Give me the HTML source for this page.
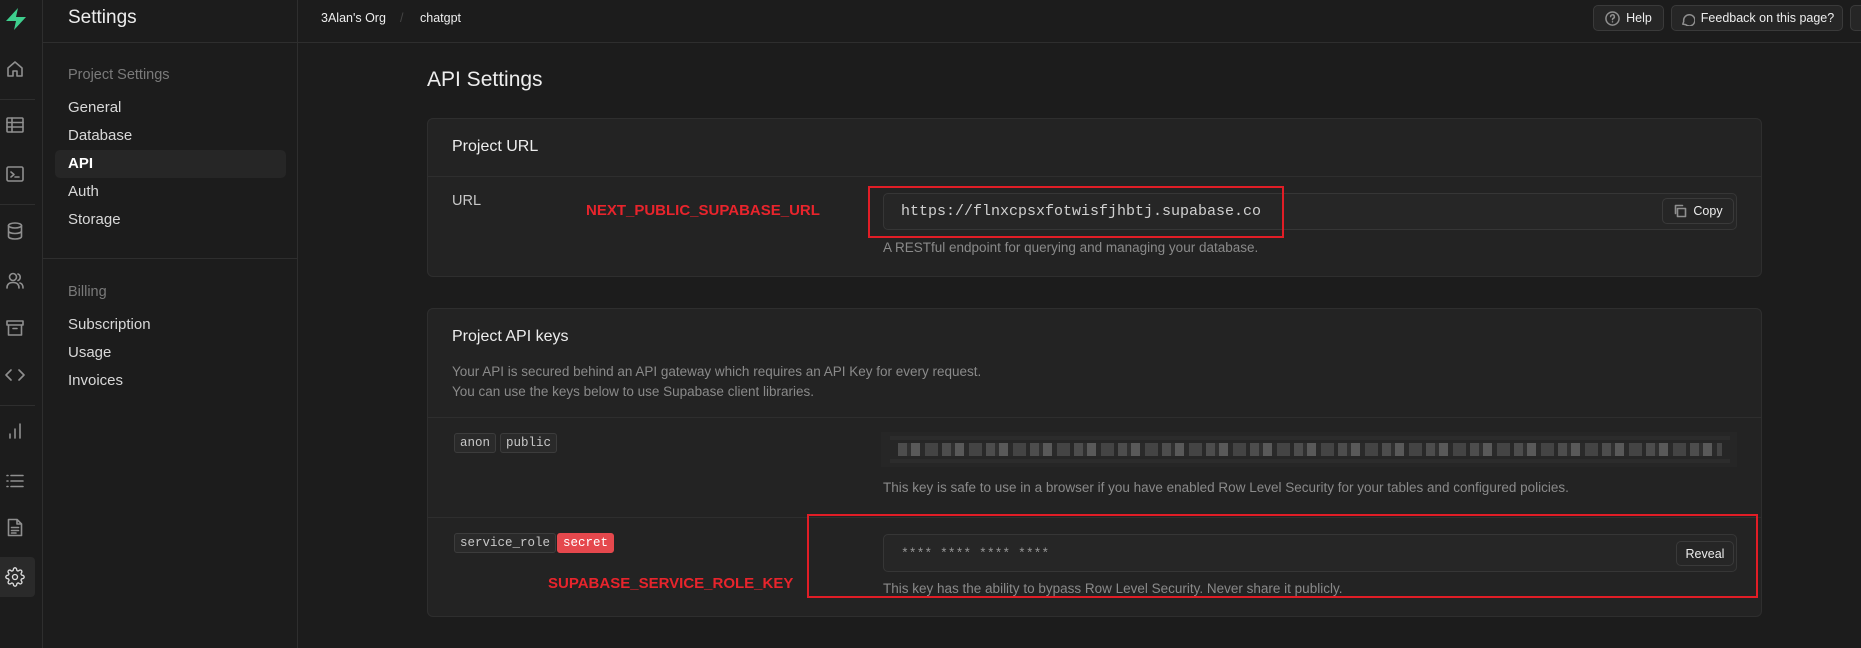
<!DOCTYPE html>
<html><head><meta charset="utf-8"><style>
*{box-sizing:border-box;margin:0;padding:0}
body{width:1861px;height:648px;background:#1c1c1c;font-family:"Liberation Sans",sans-serif;color:#ededed;position:relative;overflow:hidden}
.a{position:absolute;white-space:nowrap}
.rail{left:0;top:0;width:43px;height:648px;border-right:1px solid #2e2e2e}
.side{left:43px;top:0;width:255px;height:648px;border-right:1px solid #2e2e2e}
.nav{font-size:15px;color:#d8d8d8}
.grp{font-size:14.5px;color:#7a7a7a}
.card{background:#232323;border:1px solid #2e2e2e;border-radius:6px}
.hr{height:1px;background:#2e2e2e}
.inp{background:#262626;border:1px solid #363636;border-radius:5px}
.btn{background:#262626;border:1px solid #3a3a3a;border-radius:5px;font-size:12.5px;color:#ededed;display:flex;align-items:center;justify-content:center;gap:6px}
.chip{background:#2a2a2a;border:1px solid #3c3c3c;border-radius:3px;font-family:"Liberation Mono",monospace;font-size:12.5px;color:#c8c8c8;height:20px;line-height:18px;padding:0 5px}
.red{color:#e8242c;font-weight:bold;font-size:15px}
.box{border:2px solid #e11d26}
.hlp{font-size:13.5px;color:#8a8a8a}
svg{stroke:#8f8f8f;fill:none;stroke-width:1.6;stroke-linecap:round;stroke-linejoin:round}
</style></head><body>
<div class="a rail"></div>
<div class="a side"></div>
<div class="a hr" style="left:43px;top:42px;width:1818px"></div>
<div class="a hr" style="left:43px;top:258px;width:255px"></div>
<div class="a hr" style="left:0;top:99px;width:35px"></div>
<div class="a hr" style="left:0;top:204px;width:35px"></div>
<div class="a hr" style="left:0;top:405px;width:35px"></div>
<svg class="a" style="left:3px;top:6px;stroke:none" width="26" height="26" viewBox="0 0 26 26"><path d="M15 2 L3 15 H13 L11 24 L23 11 H13 Z" fill="#3ecf8e"/></svg>
<svg class="a" style="left:6px;top:60px" width="18" height="18" viewBox="0 0 18 18"><path d="M2 8 L9 2 L16 8 V16 H11 V11 H7 V16 H2 Z"/></svg>
<svg class="a" style="left:6px;top:117px" width="18" height="16" viewBox="0 0 18 16"><rect x="1" y="1" width="16" height="14" rx="1"/><path d="M1 5.5H17M1 10H17M6 1V15"/></svg>
<svg class="a" style="left:6px;top:166px" width="18" height="16" viewBox="0 0 18 16"><rect x="1" y="1" width="16" height="14" rx="1.5"/><path d="M5 6L8 8.5L5 11M9 11H13"/></svg>
<svg class="a" style="left:7px;top:222px" width="16" height="18" viewBox="0 0 16 18"><ellipse cx="8" cy="3.5" rx="6.5" ry="2.5"/><path d="M1.5 3.5V14.5C1.5 16 4.5 17 8 17S14.5 16 14.5 14.5V3.5M1.5 9C1.5 10.5 4.5 11.5 8 11.5S14.5 10.5 14.5 9"/></svg>
<svg class="a" style="left:6px;top:272px" width="18" height="17" viewBox="0 0 18 17"><circle cx="7" cy="5" r="3.5"/><path d="M1 16C1 12 3.5 10.5 7 10.5S13 12 13 16M12 2A3.5 3.5 0 0 1 12 8.5M14 11C16 11.5 17 13 17 16"/></svg>
<svg class="a" style="left:6px;top:320px" width="18" height="16" viewBox="0 0 18 16"><rect x="1" y="1" width="16" height="4"/><path d="M2.5 5V15H15.5V5M7 8.5H11"/></svg>
<svg class="a" style="left:5px;top:369px" width="20" height="12" viewBox="0 0 20 12"><path d="M6 1L1 6L6 11M14 1L19 6L14 11"/></svg>
<svg class="a" style="left:8px;top:423px" width="14" height="16" viewBox="0 0 14 16"><path d="M2 15V11M7 15V6M12 15V1"/></svg>
<svg class="a" style="left:6px;top:474px" width="18" height="14" viewBox="0 0 18 14"><path d="M1 1.5H2M1 7H2M1 12.5H2M5 1.5H17M5 7H17M5 12.5H17"/></svg>
<svg class="a" style="left:7px;top:518px" width="16" height="19" viewBox="0 0 16 19"><path d="M1.5 1.5H10L14.5 6V17.5H1.5Z M10 1.5V6H14.5 M4.5 9.5H11.5M4.5 12.5H11.5M4.5 15H9"/></svg>
<div class="a" style="left:0;top:557px;width:35px;height:40px;background:#2a2a2a;border-radius:0 4px 4px 0"></div>
<svg class="a" style="left:5px;top:567px" width="20" height="20" viewBox="0 0 24 24"><circle cx="12" cy="12" r="3" stroke="#ddd"/><path stroke="#ddd" d="M19.4 15a1.65 1.65 0 0 0 .33 1.82l.06.06a2 2 0 1 1-2.83 2.83l-.06-.06a1.65 1.65 0 0 0-1.820-.33 1.65 1.65 0 0 0-1 1.51V21a2 2 0 1 1-4 0v-.09A1.65 1.65 0 0 0 9 19.4a1.65 1.65 0 0 0-1.82.33l-.06.06a2 2 0 1 1-2.83-2.83l.06-.06A1.65 1.65 0 0 0 4.68 15a1.65 1.65 0 0 0-1.51-1H3a2 2 0 1 1 0-4h.09A1.65 1.65 0 0 0 4.6 9a1.65 1.65 0 0 0-.33-1.82l-.06-.06a2 2 0 1 1 2.83-2.83l.06.06A1.65 1.65 0 0 0 9 4.68a1.65 1.65 0 0 0 1-1.51V3a2 2 0 1 1 4 0v.09a1.65 1.65 0 0 0 1 1.51 1.65 1.65 0 0 0 1.82-.33l.06-.06a2 2 0 1 1 2.83 2.83l-.06.06A1.65 1.65 0 0 0 19.4 9a1.65 1.65 0 0 0 1.51 1H21a2 2 0 1 1 0 4h-.09a1.65 1.65 0 0 0-1.51 1z"/></svg>

<div class="a" style="left:68px;top:7px;font-size:19px;color:#ededed">Settings</div>
<div class="a grp" style="left:68px;top:67px">Project Settings</div>
<div class="a" style="left:55px;top:150px;width:231px;height:28px;background:#262626;border-radius:5px"></div>
<div class="a nav" style="left:68px;top:99px">General</div>
<div class="a nav" style="left:68px;top:127px">Database</div>
<div class="a nav" style="left:68px;top:155px;color:#fff;font-weight:bold">API</div>
<div class="a nav" style="left:68px;top:183px">Auth</div>
<div class="a nav" style="left:68px;top:211px">Storage</div>
<div class="a grp" style="left:68px;top:284px">Billing</div>
<div class="a nav" style="left:68px;top:316px">Subscription</div>
<div class="a nav" style="left:68px;top:344px">Usage</div>
<div class="a nav" style="left:68px;top:372px">Invoices</div>

<div class="a" style="left:321px;top:11px;font-size:12.5px">3Alan's Org</div>
<div class="a" style="left:400px;top:11px;font-size:12.5px;color:#444">/</div>
<div class="a" style="left:420px;top:11px;font-size:12.5px">chatgpt</div>
<div class="a btn" style="left:1593px;top:5px;width:71px;height:26px"><svg width="15" height="15" viewBox="0 0 16 16"><circle cx="8" cy="8" r="7"/><path d="M6 6a2 2 0 1 1 2.5 2c-.5.2-.5.6-.5 1.2M8 11.5v.1"/></svg>Help</div>
<div class="a btn" style="left:1671px;top:5px;width:172px;height:26px"><svg width="15" height="15" viewBox="0 0 16 16"><path d="M3 14l1-3A6 6 0 1 1 6 14.5Z"/></svg>Feedback on this page?</div>
<div class="a btn" style="left:1850px;top:5px;width:30px;height:26px"></div>

<div class="a" style="left:427px;top:68px;font-size:21px;color:#ededed">API Settings</div>

<div class="a card" style="left:427px;top:118px;width:1335px;height:159px"></div>
<div class="a hr" style="left:428px;top:176px;width:1333px"></div>
<div class="a" style="left:452px;top:138px;font-size:16px">Project URL</div>
<div class="a" style="left:452px;top:193px;font-size:14.5px;color:#c8c8c8">URL</div>
<div class="a red" style="left:586px;top:202px">NEXT_PUBLIC_SUPABASE_URL</div>
<div class="a inp" style="left:883px;top:193px;width:854px;height:37px"></div>
<div class="a" style="left:901px;top:203px;font-family:'Liberation Mono',monospace;font-size:15px;color:#d0d0d0">https://flnxcpsxfotwisfjhbtj.supabase.co</div>
<div class="a box" style="left:868px;top:186px;width:416px;height:52px"></div>
<div class="a btn" style="left:1662px;top:198px;width:72px;height:26px"><svg width="14" height="14" viewBox="0 0 14 14"><rect x="4.5" y="4.5" width="8" height="8"/><path d="M2.5 9.5V1.5H9.5"/></svg>Copy</div>
<div class="a hlp" style="left:883px;top:240px">A RESTful endpoint for querying and managing your database.</div>

<div class="a card" style="left:427px;top:308px;width:1335px;height:309px"></div>
<div class="a" style="left:452px;top:328px;font-size:16px">Project API keys</div>
<div class="a hlp" style="left:452px;top:362px;line-height:20px">Your API is secured behind an API gateway which requires an API Key for every request.<br>You can use the keys below to use Supabase client libraries.</div>
<div class="a hr" style="left:428px;top:417px;width:1333px"></div>
<div class="a chip" style="left:454px;top:433px">anon</div>
<div class="a chip" style="left:500px;top:433px">public</div>
<div class="a" style="left:881px;top:432px;width:856px;height:35px;background:#262626"></div>
<div class="a" style="left:890px;top:436px;width:840px;height:4px;background:#2c2c2c"></div>
<div class="a" style="left:898px;top:443px;width:824px;height:13px;background:repeating-linear-gradient(90deg,#5a5a5a 0 9px,#333 9px 13px,#6a6a6a 13px 22px,#2c2c2c 22px 27px,#4e4e4e 27px 40px,#2a2a2a 40px 44px);opacity:.75"></div>
<div class="a" style="left:890px;top:459px;width:840px;height:4px;background:#2c2c2c"></div>
<div class="a hlp" style="left:883px;top:480px">This key is safe to use in a browser if you have enabled Row Level Security for your tables and configured policies.</div>
<div class="a hr" style="left:428px;top:517px;width:1333px"></div>
<div class="a chip" style="left:454px;top:533px">service_role</div>
<div class="a chip" style="left:557px;top:533px;background:#e5484d;border-color:#e5484d;color:#fff">secret</div>
<div class="a red" style="left:548px;top:575px">SUPABASE_SERVICE_ROLE_KEY</div>
<div class="a inp" style="left:883px;top:534px;width:854px;height:38px"></div>
<div class="a" style="left:901px;top:546px;font-family:'Liberation Mono',monospace;font-size:13px;color:#999">**** **** **** ****</div>
<div class="a btn" style="left:1676px;top:541px;width:58px;height:25px">Reveal</div>
<div class="a hlp" style="left:883px;top:581px">This key has the ability to bypass Row Level Security. Never share it publicly.</div>
<div class="a box" style="left:807px;top:514px;width:951px;height:84px"></div>
</body></html>
